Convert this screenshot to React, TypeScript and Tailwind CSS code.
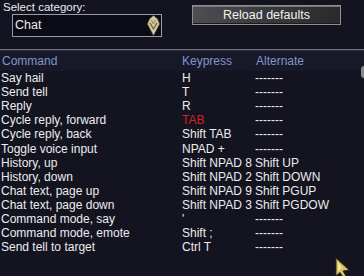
const rows: { cmd: string; key: string; alt: string; red?: boolean }[] = [
  { cmd: "Say hail", key: "H", alt: "-------" },
  { cmd: "Send tell", key: "T", alt: "-------" },
  { cmd: "Reply", key: "R", alt: "-------" },
  { cmd: "Cycle reply, forward", key: "TAB", alt: "-------", red: true },
  { cmd: "Cycle reply, back", key: "Shift TAB", alt: "-------" },
  { cmd: "Toggle voice input", key: "NPAD +", alt: "-------" },
  { cmd: "History, up", key: "Shift NPAD 8", alt: "Shift UP" },
  { cmd: "History, down", key: "Shift NPAD 2", alt: "Shift DOWN" },
  { cmd: "Chat text, page up", key: "Shift NPAD 9", alt: "Shift PGUP" },
  { cmd: "Chat text, page down", key: "Shift NPAD 3", alt: "Shift PGDOW" },
  { cmd: "Command mode, say", key: "'", alt: "-------" },
  { cmd: "Command mode, emote", key: "Shift ;", alt: "-------" },
  { cmd: "Send tell to target", key: "Ctrl T", alt: "-------" },
]

function Crest() {
  return (
    <svg width="13" height="21" viewBox="0 0 13 21">
      <path d="M6.5 0.5 L10.5 4 L12.5 9 L6.5 20.5 L0.5 9 L2.5 4 Z" fill="#d4cba0" stroke="#6b6444" strokeWidth="0.6" />
      <path d="M3 8 L6.5 14 L10 8" fill="none" stroke="#5a5236" strokeWidth="1.1" />
      <path d="M4.5 5 L6.5 9 L8.5 5" fill="none" stroke="#7d7452" strokeWidth="0.9" />
    </svg>
  )
}

export default function App() {
  return (
    <div
      className="relative w-[364px] h-[276px] overflow-hidden bg-[#131420] text-[#ececec]"
      style={{ fontFamily: '"Liberation Sans", Arial, sans-serif' }}
    >
      <div className="flex h-[49px]">
        <div className="flex flex-col pl-[3px]">
          <span className="text-[11.5px] leading-[13px] mt-[1px]">Select category:</span>
          <div className="ml-[9px] w-[150px] h-[23px] border border-[#9a9aa6] bg-[#0b0b15] flex items-center justify-between pl-[2px] pr-[1px]">
            <span className="text-[12.5px] leading-none">Chat</span>
            <Crest />
          </div>
        </div>
        <button className="ml-[30px] mt-[5px] w-[149px] h-[20px] border border-[#8e8e8e] bg-gradient-to-r from-[#4e4e52] via-[#3a3a3d] to-[#2a2a2c] shadow-[inset_0_1px_0_#777,inset_0_-1px_0_#1a1a1a] text-[12.5px] leading-none text-[#f2f2f2] flex items-center justify-center">
          Reload defaults
        </button>
      </div>

      <div className="h-[2px] bg-[#6c6c80] border-b border-[#2a2a3a]" />

      <div className="flex h-[20px] items-center text-[12px] text-[#8393cc] bg-[#171929]">
        <span className="w-[182px] pl-[2px]">Command</span>
        <span className="w-[74px]">Keypress</span>
        <span>Alternate</span>
      </div>

      <div className="flex flex-col text-[12px]">
        {rows.map((r) => (
          <div key={r.cmd} className="flex h-[14.1px] items-center leading-none">
            <span className="w-[182px] pl-[1px] whitespace-nowrap">{r.cmd}</span>
            <span className={`w-[73px] whitespace-nowrap ${r.red ? "text-[#d42222]" : ""}`}>{r.key}</span>
            <span className="whitespace-nowrap">{r.alt}</span>
          </div>
        ))}
      </div>

      <div className="absolute right-0 top-[66px] w-[3px] h-[12px] bg-[#8a8a8a] rounded-l-sm" />

      <svg className="absolute left-[334px] top-[257px]" width="18" height="20" viewBox="0 0 18 20">
        <path d="M2 1 L2 19 L6 15.5 L9 20 L12 19 L9 14 L15 13 Z" fill="#d8c468" stroke="#2e2a14" strokeWidth="1" />
        <path d="M4 5 L4 14 L8 11 Z" fill="#f3e699" />
      </svg>
    </div>
  )
}
